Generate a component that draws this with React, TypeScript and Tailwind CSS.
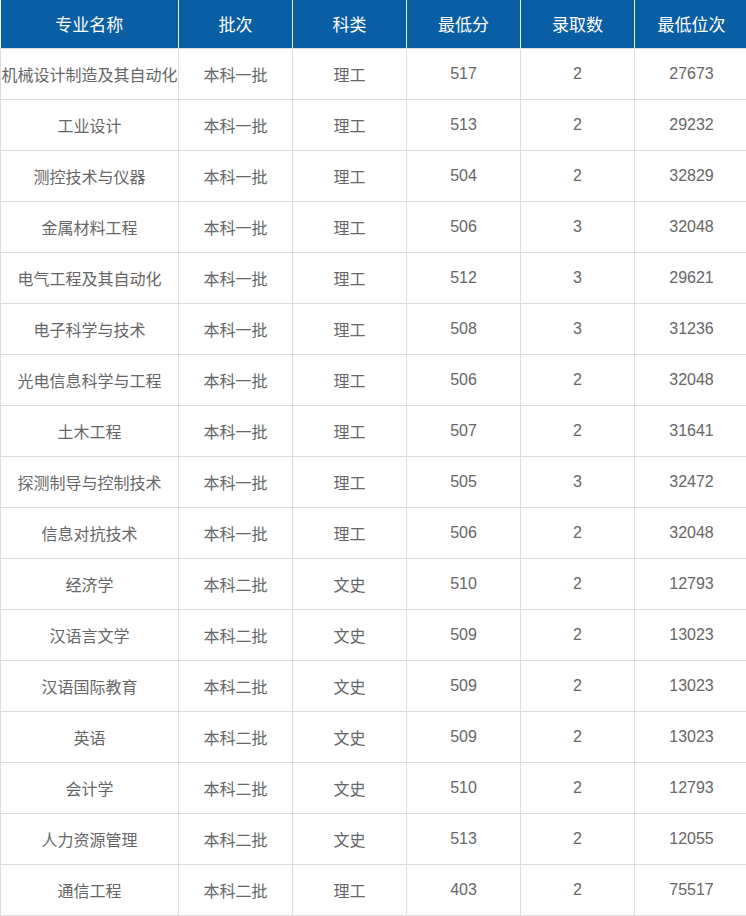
import React from "react";

const rows: string[][] = [
  ["机械设计制造及其自动化", "本科一批", "理工", "517", "2", "27673"],
  ["工业设计", "本科一批", "理工", "513", "2", "29232"],
  ["测控技术与仪器", "本科一批", "理工", "504", "2", "32829"],
  ["金属材料工程", "本科一批", "理工", "506", "3", "32048"],
  ["电气工程及其自动化", "本科一批", "理工", "512", "3", "29621"],
  ["电子科学与技术", "本科一批", "理工", "508", "3", "31236"],
  ["光电信息科学与工程", "本科一批", "理工", "506", "2", "32048"],
  ["土木工程", "本科一批", "理工", "507", "2", "31641"],
  ["探测制导与控制技术", "本科一批", "理工", "505", "3", "32472"],
  ["信息对抗技术", "本科一批", "理工", "506", "2", "32048"],
  ["经济学", "本科二批", "文史", "510", "2", "12793"],
  ["汉语言文学", "本科二批", "文史", "509", "2", "13023"],
  ["汉语国际教育", "本科二批", "文史", "509", "2", "13023"],
  ["英语", "本科二批", "文史", "509", "2", "13023"],
  ["会计学", "本科二批", "文史", "510", "2", "12793"],
  ["人力资源管理", "本科二批", "文史", "513", "2", "12055"],
  ["通信工程", "本科二批", "理工", "403", "2", "75517"],
];

const heads = ["专业名称", "批次", "科类", "最低分", "录取数", "最低位次"];
const widths = ["w-[178px]", "w-[114px]", "w-[114px]", "w-[114px]", "w-[114px]", "w-[114px]"];

export default function App() {
  return (
    <div className="w-[746px] h-[916px] overflow-hidden bg-white" style={{ fontFamily: '"Microsoft YaHei", "Noto Sans CJK SC", sans-serif' }}>
      <table className="table-fixed border-collapse w-[748px]">
        <colgroup>
          {widths.map((w, i) => (
            <col key={i} className={w} />
          ))}
        </colgroup>
        <thead>
          <tr className="h-[48px] bg-[#0a5ea4]">
            {heads.map((h, i) => (
              <th key={i} className="border-l border-r border-[#e8eef5] text-white font-normal text-[17px] text-center p-0 first:border-l-0">
                {h}
              </th>
            ))}
          </tr>
        </thead>
        <tbody>
          {rows.map((r, ri) => (
            <tr key={ri} className="h-[51px]">
              {r.map((c, ci) => (
                <td
                  key={ci}
                  className="border border-[#dddddd] text-[#666666] text-[16px] text-center p-0 whitespace-nowrap overflow-hidden"
                  style={{ fontFamily: ci >= 3 ? '"Liberation Sans", Arial, sans-serif' : undefined }}
                >
                  {c}
                </td>
              ))}
            </tr>
          ))}
        </tbody>
      </table>
    </div>
  );
}
